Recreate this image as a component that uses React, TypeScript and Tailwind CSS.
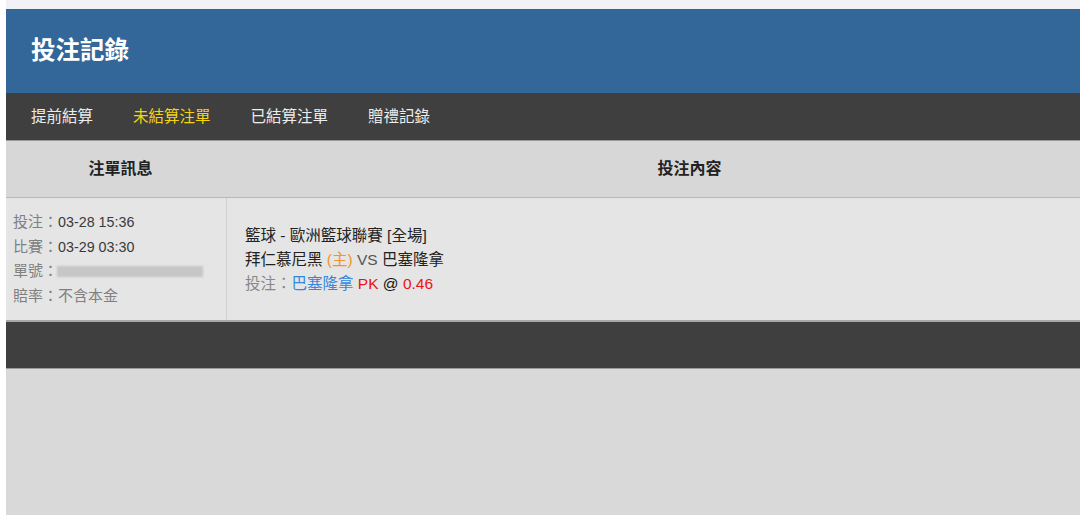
const font = "font-['Liberation_Sans','Noto_Sans_CJK_TC',sans-serif]"

const tabs = [
  { label: '提前結算', active: false },
  { label: '未結算注單', active: true },
  { label: '已結算注單', active: false },
  { label: '贈禮記錄', active: false },
]

export default function App() {
  return (
    <div className={`h-[515px] w-[1080px] overflow-hidden bg-white pl-[6px] pt-[9px] ${font}`}>
      <div className="flex h-[506px] w-[1146px] flex-col bg-[#d9d9d9] shadow-[0_-9px_0_#f2f2f6]">
        <header className="flex h-[84px] items-center bg-[#336699] pl-[25px]">
          <h1 className="text-[24.5px] font-bold text-white">投注記錄</h1>
        </header>

        <nav className="flex h-[47px] items-center gap-[40px] bg-[#3f3f3f] pl-[25px] text-[15.5px]">
          {tabs.map((t) => (
            <span key={t.label} className={t.active ? 'text-[#f2d511]' : 'text-[#ececec]'}>
              {t.label}
            </span>
          ))}
        </nav>

        <div className="flex h-[58px] border-t border-[#999] border-b border-b-[#b8b8b8] bg-[#d7d7d7] text-[16px] font-bold text-[#222]">
          <div className="flex w-[221px] items-center justify-center pl-[8px]">注單訊息</div>
          <div className="flex flex-1 items-center justify-center">投注內容</div>
        </div>

        <div className="flex h-[122px] bg-[#e5e5e5] text-[15px]">
          <div className="flex w-[221px] flex-col justify-center border-r border-[#cfcfcf] pl-[7px] leading-[24.5px] text-[#808080]">
            <div>
              投注：<span className="text-[14.3px] text-[#3a3a3a]">03-28 15:36</span>
            </div>
            <div>
              比賽：<span className="text-[14.3px] text-[#3a3a3a]">03-29 03:30</span>
            </div>
            <div className="flex items-center">
              單號：
              <span className="ml-[-1px] h-[11px] w-[146px] bg-[#c6c6c6] blur-[1px]" />
            </div>
            <div>賠率：不含本金</div>
          </div>
          <div className="flex flex-1 flex-col justify-center pl-[18px] pt-[1px] text-[15.5px] leading-[24px] text-[#222]">
            <div>籃球 - 歐洲籃球聯賽 [全場]</div>
            <div>
              拜仁慕尼黑 <span className="text-[#f0952a]">(主)</span> <span className="text-[#555]">VS</span> 巴塞隆拿
            </div>
            <div className="text-[#888]">
              投注：<span className="text-[#3388dd]">巴塞隆拿</span> <span className="text-[#ee1111]">PK</span>{' '}
              <span className="text-[#111]">@</span> <span className="text-[#ee1111]">0.46</span>
            </div>
          </div>
        </div>

        <div className="h-[49px] border-t-2 border-[#a8a8a8] border-b border-b-[#9a9a9a] bg-[#3f3f3f]" />

        <div className="flex-1 bg-[#d9d9d9]" />
      </div>
    </div>
  )
}
